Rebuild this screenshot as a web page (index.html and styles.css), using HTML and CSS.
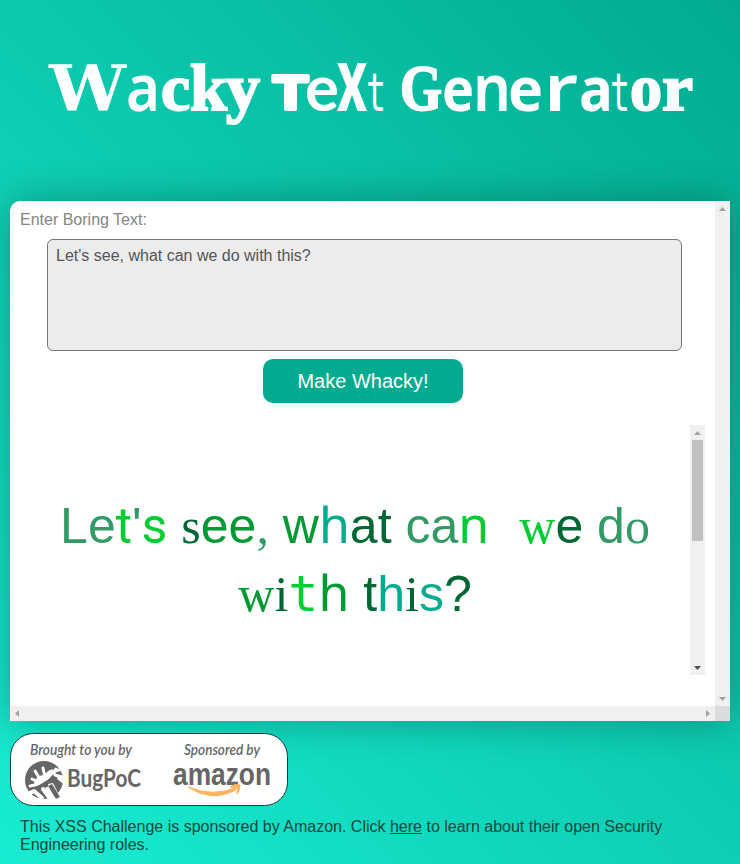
FILE: index.html
```html
<!DOCTYPE html>
<html lang="en">
<head>
<meta charset="utf-8">
<title>Wacky Text Generator</title>
<link rel="stylesheet" href="styles.css">
</head>
<body>
<header class="banner">
<svg class="wordmark" viewBox="0 0 740 201" width="740" height="201" role="img" aria-label="Wacky Text Generator">
<g class="thin-slab"><text x="49" y="111" textLength="77" lengthAdjust="spacingAndGlyphs" class="w">W</text></g>
<text x="126" y="111" class="noto" textLength="34" lengthAdjust="spacingAndGlyphs">a</text>
<g class="fat"><text x="161" y="110" textLength="29" lengthAdjust="spacingAndGlyphs">c</text><text x="190" y="110" textLength="37" lengthAdjust="spacingAndGlyphs">k</text><text x="226" y="110" textLength="34" lengthAdjust="spacingAndGlyphs">y</text></g>
<text x="273" y="109" class="round" textLength="35" lengthAdjust="spacingAndGlyphs">T</text>
<text x="305" y="111" class="lato" textLength="34" lengthAdjust="spacingAndGlyphs">e</text>
<text x="337" y="111" class="impact" textLength="30" lengthAdjust="spacingAndGlyphs">X</text>
<path d="M372.500 70.500h5v15h7v4h-7v17h5v5h-10v-21.500h-5.500v-4h5.500z" class="hidden"/>
<text x="366" y="111" class="mono" textLength="20" lengthAdjust="spacingAndGlyphs">t</text>
<g class="fat"><text x="400" y="110" class="g" textLength="42" lengthAdjust="spacingAndGlyphs">G</text></g>
<text x="442" y="111" class="open" textLength="32" lengthAdjust="spacingAndGlyphs">e</text>
<text x="473" y="111" class="noto" textLength="38" lengthAdjust="spacingAndGlyphs">n</text>
<text x="508" y="111" class="open" textLength="35" lengthAdjust="spacingAndGlyphs">e</text>
<text x="544" y="111" class="noto" textLength="34" lengthAdjust="spacingAndGlyphs">r</text>
<text x="579" y="111" class="open" textLength="34" lengthAdjust="spacingAndGlyphs">a</text>
<text x="610" y="111" class="mono" textLength="20" lengthAdjust="spacingAndGlyphs">t</text>
<g class="fat"><text x="630" y="110" textLength="32" lengthAdjust="spacingAndGlyphs">o</text><text x="662" y="110" textLength="31" lengthAdjust="spacingAndGlyphs">r</text></g>
</svg>
</header>
<main class="card">
<section class="content">
<label class="label" for="boring">Enter Boring Text:</label>
<textarea class="input" id="boring">Let's see, what can we do with this?</textarea>
<button class="button">Make Whacky!</button>
<div class="result">
<div class="output"><p class="line"><span class="sage">Le</span><span class="lime rb">t</span><span class="sage">'</span><span class="lime rb">s</span> <span class="dark serif">s</span><span class="green">ee</span><span class="sage serif">,</span> <span class="green">w</span><span class="teal noto">h</span><span class="dark">at</span> <span class="sage">ca</span><span class="lime noto">n</span><span class="mono"> </span><span class="lime serif">w</span><span class="dark">e</span> <span class="sage">d</span><span class="sage serif">o</span></p><p class="line"><span class="green serif">w</span><span class="dark serif">i</span><span class="lime mono">t</span><span class="green noto">h</span> <span class="dark">t</span><span class="teal">h</span><span class="dark serif">i</span><span class="teal">s</span><span class="dark">?</span></p></div>
<div class="vbar inner"><i class="up"></i><i class="thumb"></i><i class="down active"></i></div>
</div>
</section>
<div class="vbar"><i class="up"></i><i class="down"></i></div>
<div class="hbar"><i class="left"></i><i class="right"></i></div>
<div class="corner"></div>
</main>
<footer class="footer">
<svg class="sponsors" viewBox="0 0 278 73" width="278" height="73">
<rect x=".5" y=".5" width="277" height="72" rx="23" fill="#fff" stroke="#173d39"/>
<g fill="#666">
<text class="script" x="20" y="22" textLength="102" lengthAdjust="spacingAndGlyphs">Brought to you by</text>
<text class="script" x="174" y="22" textLength="76" lengthAdjust="spacingAndGlyphs">Sponsored by</text>
<circle cx="34" cy="47" r="19"/>
<text class="bug" x="57" y="54" textLength="74" lengthAdjust="spacingAndGlyphs">BugPoC</text>
<text class="amazon" x="163" y="52" textLength="98" lengthAdjust="spacingAndGlyphs">amazon</text>
</g>
<g fill="none" stroke="#fff" stroke-linecap="round" stroke-linejoin="round">
<path d="M20 53q8-1 15-8t14-8M22 46l6 3M25 38l5 8M33 35l2 9M40 39l4 1 2-4M45 42l7 2" stroke-width="3"/>
<path d="M24 54q0-12 11-12 4-7 11-5-5 8-10 11-6 4-12 6z" fill="#fff" stroke="none"/>
<path d="M18 61l6-3 8 7-1 4M33 56l8 11M40 53l8 11M49 45l5 4" stroke-width="4"/>
</g>
<path d="M35 55l8 16 4-3-8-15z" fill="#fff"/><path d="M38 51l9 20 5-3-9-18z" fill="#fff"/><path d="M38 53l4-2 8 13-4 2z" fill="#666"/>
<path d="M178 54q24 16 48 3l-1-2q-22 9-47-1zM220 54q5-4 10-2 0 5-3 9 0-3 1-6-3-1-8-1z" fill="#ffb45c" stroke="#ffb45c" stroke-width="1"/>
</svg>
<p class="note">This XSS Challenge is sponsored by Amazon. Click <a href="#">here</a> to learn about their open Security Engineering roles.</p>
</footer>
</body>
</html>
```
FILE: styles.css
```css
* { box-sizing: border-box; }
body { margin: 0; height: 864px; overflow: hidden; font: 16px/18px "Liberation Sans", Arial, sans-serif; background: linear-gradient(45deg, #18ecd2, #02ab8f); }
.banner { height: 201px; }
.wordmark { display: block; fill: #fff; font-size: 60px; }
.w { font: bold 64px "DejaVu Serif", serif; }
.noto { font-family: "Noto Sans", sans-serif; }
.wordmark .noto { font-size: 65px; font-weight: 600; }
.wordmark .lato { font: 700 64px Lato, sans-serif; }
.wordmark .open { font: 700 61px "Open Sans", sans-serif; }
.wordmark .mono { font: 400 54px "DejaVu Sans Mono", monospace; }
.round { font: bold 49px "Liberation Sans", sans-serif; stroke: #fff; stroke-width: 4px; stroke-linejoin: round; }
.impact { font: 900 66px Roboto, sans-serif; }
.fat { font: bold 66px "Liberation Serif", serif; stroke: #fff; stroke-width: 2px; }
.fat .g { font-size: 65px; }
.hidden { display: none; }
.card { width: 720px; height: 520px; margin: 0 10px; display: grid; grid-template: 505px 15px / 705px 15px; background: #fff; border-radius: 10px 0 0 0; box-shadow: 0 0 40px rgba(0, 0, 0, .3); }
.content { display: flex; flex-direction: column; padding: 10px 10px 0; }
.label { color: #858585; }
.input { width: 635px; height: 112px; margin: 10px 0 8px 27px; padding: 7px 8px; resize: none; border: 1px solid #767676; border-radius: 6px; background: #ececec; color: #555; font: inherit; }
.button { width: 200px; height: 44px; margin-left: 243px; border: 0; border-radius: 10px; background: #02ab8f; color: #fff; font: 20px "Liberation Sans", sans-serif; }
.result { display: flex; height: 250px; margin-top: 22px; }
.output { flex: 1; padding-top: 65px; font-size: 50px; line-height: 68px; text-align: center; }
.line { height: 68px; margin: 0; white-space: pre; }
.serif { font-family: "Liberation Serif", serif; }
.mono { font-family: "DejaVu Sans Mono", monospace; }
.rb { font-family: Roboto, sans-serif; }
.sage { color: #339966; }
.lime { color: #00cc33; }
.dark { color: #006633; }
.green { color: #009933; }
.teal { color: #02ab8f; }
.vbar, .hbar { display: flex; justify-content: space-between; align-items: center; background: #f0f0f0; }
.vbar { width: 15px; flex-direction: column; padding: 6px 0 5px; }
.hbar { padding: 0 5px; }
.inner { position: relative; }
.thumb { position: absolute; top: 15px; left: 2px; width: 11px; height: 101px; background: #c1c1c1; }
.up, .down { width: 7px; height: 4px; background: #a3a3a3; clip-path: polygon(50% 0, 100% 100%, 0 100%); }
.down { clip-path: polygon(0 0, 100% 0, 50% 100%); }
.active { background: #505050; }
.left, .right { width: 4px; height: 7px; background: #a3a3a3; clip-path: polygon(0 50%, 100% 0, 100% 100%); }
.right { clip-path: polygon(0 0, 100% 50%, 0 100%); }
.corner { background: #dcdcdc; }
.footer { padding: 12px 10px 0; position: relative; }
.sponsors { display: block; }
.script { font: italic 600 16px Lato, sans-serif; }
.bug { font: bold 24px Lato, sans-serif; }
.amazon { font: bold 31px "Liberation Sans", sans-serif; }
.note { margin: 12px 10px 0; color: #0a4a40; }
.note a { color: inherit; }
```
